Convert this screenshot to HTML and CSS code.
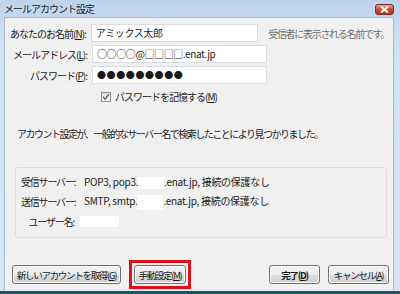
FILE: index.html
```html
<!DOCTYPE html>
<html lang="ja">
	<head>
		<meta charset="UTF-8" />
		<title>メールアカウント設定</title>
		<link rel="stylesheet" href="styles.css">
	</head>
	<body>
		<div class="window">
			<div class="titlebar">
				<span class="title">メールアカウント設定</span>
				<span class="close">
					<svg width="9" height="7" viewBox="0 0 9 7"><path d="M1 0.5 L8 6.5 M8 0.5 L1 6.5" stroke="#fff" stroke-width="2"/></svg>
				</span>
			</div>
			<div class="client">
				<div class="form">
					<div class="row">
						<label class="label">あなたのお名前(<u>N</u>):</label>
						<div class="input">アミックス太郎</div>
						<span class="hint">受信者に表示される名前です。</span>
					</div>
					<div class="row">
						<label class="label">メールアドレス(<u>L</u>):</label>
						<div class="input">○○○○@□□□□.enat.jp</div>
					</div>
					<div class="row">
						<label class="label">パスワード(<u>P</u>):</label>
						<div class="input dots">●●●●●●●●●</div>
					</div>
					<div class="check-row">
						<span class="checkbox">
							<svg width="8" height="8" viewBox="0 0 8 8"><path d="M1.2 4 L3 6.3 L6.8 1.3" stroke="#3a4f7a" stroke-width="1.3" fill="none"/></svg>
						</span>
						<span>パスワードを記憶する(<u>M</u>)</span>
					</div>
				</div>

				<p class="message">アカウント設定が、一般的なサーバー名で検索したことにより見つかりました。</p>

				<div class="group">
					<div class="srow">
						<span class="slabel">受信サーバー:</span>
						<span>POP3, pop3.<span class="mask"></span>.enat.jp, 接続の保護なし</span>
					</div>
					<div class="srow">
						<span class="slabel">送信サーバー:</span>
						<span>SMTP, smtp.<span class="mask tall"></span>.enat.jp, 接続の保護なし</span>
					</div>
					<div class="srow">
						<span class="slabel user">ユーザー名:</span>
						<span class="mask user-mask"></span>
					</div>
				</div>

				<div class="buttons">
					<button class="btn new">新しいアカウントを取得(<u>G</u>)</button>
					<span class="highlight">
						<button class="btn manual">手動設定(<u>M</u>)</button>
					</span>
					<span class="spacer"></span>
					<button class="btn done"><b>完了(<u>D</u>)</b></button>
					<button class="btn cancel">キャンセル(<u>A</u>)</button>
				</div>
			</div>
		</div>
	</body>
</html>
```

FILE: styles.css
```css
* { margin: 0; padding: 0; box-sizing: border-box; }
body {
	width: 400px;
	height: 294px;
	overflow: hidden;
	font-family: "Noto Sans CJK JP", "Liberation Sans", sans-serif;
	font-size: 10px;
	color: #1a1a1a;
	background: #c9dcf0;
}
.window {
	height: 294px;
	display: flex;
	flex-direction: column;
	background: linear-gradient(#bcd3ec, #cfe0f3 40px, #d6e5f5);
	padding: 0 6px 0 4px;
	border-bottom: 3px solid #1f5468;
}
.titlebar {
	height: 17px;
	display: flex;
	align-items: center;
	justify-content: space-between;
}
.title {
	font-size: 10px;
	letter-spacing: -1px;
	color: #202020;
	margin-top: -1px;
}
.close {
	width: 19px;
	height: 11px;
	margin-top: 2px;
	border: 1px solid #7c2a22;
	border-radius: 3px;
	background: linear-gradient(#e8a193, #cf4a35 50%, #b8301d);
	display: flex;
	align-items: center;
	justify-content: center;
}
.client {
	flex: 1;
	background: #f0f0f0;
	border: 1px solid #a8bccf;
	border-bottom-color: #e3ecf6;
	padding: 6px 4px 0 5px;
	display: flex;
	flex-direction: column;
}
.form {
	display: flex;
	flex-direction: column;
	gap: 3px;
}
.row {
	display: flex;
	align-items: center;
	height: 18px;
}
.label {
	width: 82px;
	text-align: right;
	letter-spacing: -1px;
	padding-right: 5px;
	white-space: nowrap;
}
.input {
	width: 175px;
	height: 18px;
	background: #fff;
	border: 1px solid #d8dde3;
	padding-left: 4px;
	line-height: 16px;
	letter-spacing: -0.4px;
}
.dots {
	font-size: 9px;
	letter-spacing: 0.6px;
}
.hint {
	margin-left: 10px;
	color: #6d6d6d;
	letter-spacing: -1.3px;
	white-space: nowrap;
}
.check-row {
	display: flex;
	align-items: center;
	gap: 4px;
	margin-left: 91px;
	margin-top: 2px;
	letter-spacing: -1px;
}
.checkbox {
	width: 10px;
	height: 10px;
	border: 1px solid #8e8f8f;
	background: linear-gradient(#dcdcdc, #fafafa);
	display: flex;
	align-items: center;
	justify-content: center;
}
.message {
	margin: 22px 0 0 7px;
	letter-spacing: -1.5px;
	white-space: nowrap;
}
.group {
	margin: 26px 2px 0 5px;
	height: 71px;
	border: 1px solid #dcdcdc;
	border-radius: 3px;
	padding: 5px 0 0 5px;
	display: flex;
	flex-direction: column;
	gap: 3px;
}
.srow {
	display: flex;
	align-items: center;
	height: 17px;
	letter-spacing: -0.3px;
	white-space: nowrap;
}
.slabel {
	width: 63px;
	letter-spacing: -1.2px;
}
.slabel.user {
	text-align: right;
	padding-right: 6px;
	width: 59px;
}
.mask {
	display: inline-block;
	width: 26px;
	height: 12px;
	background: #fff;
	vertical-align: middle;
}
.mask.tall {
	height: 15px;
}
.user-mask {
	width: 39px;
	height: 11px;
}
.buttons {
	margin-top: auto;
	margin-bottom: 1px;
	display: flex;
	align-items: center;
	padding-left: 2px;
	gap: 8px;
}
.spacer { flex: 1; }
.btn {
	height: 19px;
	padding: 0;
	font-family: inherit;
	font-size: 9.5px;
	letter-spacing: -1.3px;
	color: #1a1a1a;
	border: 1px solid #707070;
	border-radius: 3px;
	background: linear-gradient(#f2f2f2, #ebebeb 50%, #dddddd 51%, #cfcfcf);
	box-shadow: inset 0 0 0 1px #fcfcfc;
	white-space: nowrap;
	cursor: pointer;
}
.btn.new {
	width: 109px;
}
.highlight {
	display: flex;
	border: 3px solid #e0101a;
	padding: 2px;
}
.btn.manual {
	width: 52px;
}
.btn.done {
	width: 51px;
}
.btn.done b {
	font-weight: 700;
}
.btn.cancel {
	width: 61px;
}
```
